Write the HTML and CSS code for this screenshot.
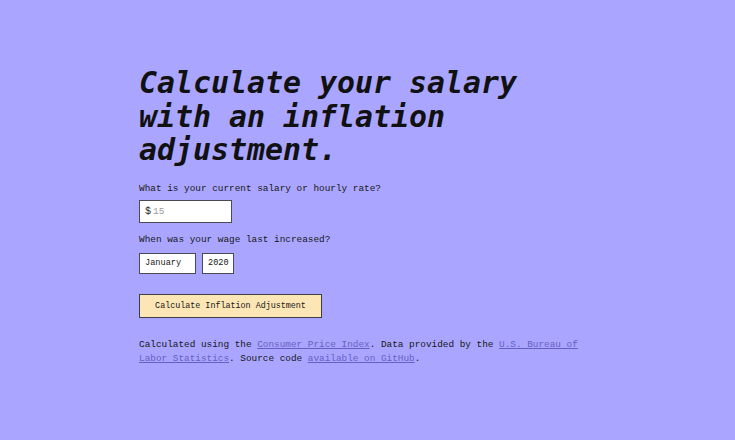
FILE: index.html
```html
<!DOCTYPE html>
<html lang="en">
<head>
  <meta charset="UTF-8">
  <meta name="viewport" content="width=device-width, initial-scale=1.0">
  <title>Inflation Adjustment Calculator</title>
  <link rel="stylesheet" href="styles.css">
</head>
<body>
  <main class="calc">
    <h1>Calculate your salary with an inflation adjustment.</h1>

    <label class="field-label" for="salary">What is your current salary or hourly rate?</label>
    <div class="money-input">
      <span class="currency">$</span>
      <input id="salary" type="text" placeholder="15">
    </div>

    <label class="field-label" for="month">When was your wage last increased?</label>
    <div class="date-row">
      <div class="box month" id="month">January</div>
      <div class="box year">2020</div>
    </div>

    <button class="calc-btn">Calculate Inflation Adjustment</button>

    <p class="credits">
      Calculated using the <a href="#">Consumer Price Index</a>. Data provided by the <a href="#">U.S. Bureau of Labor Statistics</a>. Source code <a href="#">available on GitHub</a>.
    </p>
  </main>
</body>
</html>
```

FILE: styles.css
```css
*{
  box-sizing: border-box;
}
body{
  margin: 0;
  background: #aaa6ff;
  color: #161616;
  font-family: 'Liberation Mono', 'DejaVu Sans Mono', monospace;
  font-size: 9.4px;
}
.calc{
  width: 457px;
  margin: 0 auto;
  padding-top: 66px;
  display: flex;
  flex-direction: column;
  align-items: flex-start;
}
h1{
  margin: 0 0 15px;
  font-family: 'DejaVu Sans Mono', monospace;
  font-style: italic;
  font-weight: bold;
  font-size: 29.9px;
  line-height: 33.5px;
  color: #111;
}
.field-label{
  display: block;
  line-height: 14px;
  margin-bottom: 4px;
}
.money-input{
  width: 93px;
  height: 23px;
  display: flex;
  align-items: center;
  gap: 2px;
  padding: 0 5px;
  background: #fff;
  border: 1.5px solid #4a4a55;
  margin-bottom: 10px;
}
.currency{
  font-size: 10px;
  color: #222;
}
.money-input input{
  width: 60px;
  border: 0;
  outline: 0;
  padding: 0;
  font: inherit;
  color: #222;
}
.money-input input::placeholder{
  color: #999;
}
.date-row{
  display: flex;
  gap: 6px;
  margin-top: 2px;
  margin-bottom: 20px;
}
.box{
  height: 21px;
  display: flex;
  align-items: center;
  padding: 0 5px;
  background: #fff;
  border: 1.5px solid #4a4a55;
  font-size: 8.6px;
}
.month{
  width: 57px;
}
.year{
  width: 32px;
}
.calc-btn{
  width: 183px;
  height: 24px;
  padding: 0;
  background: #fde6b6;
  border: 1.5px solid #3d3d44;
  border-radius: 0;
  font: inherit;
  font-size: 8.4px;
  color: #161616;
  margin-bottom: 20px;
}
.credits{
  margin: 0;
  line-height: 14px;
}
.credits a{
  color: #6660c4;
}
```
